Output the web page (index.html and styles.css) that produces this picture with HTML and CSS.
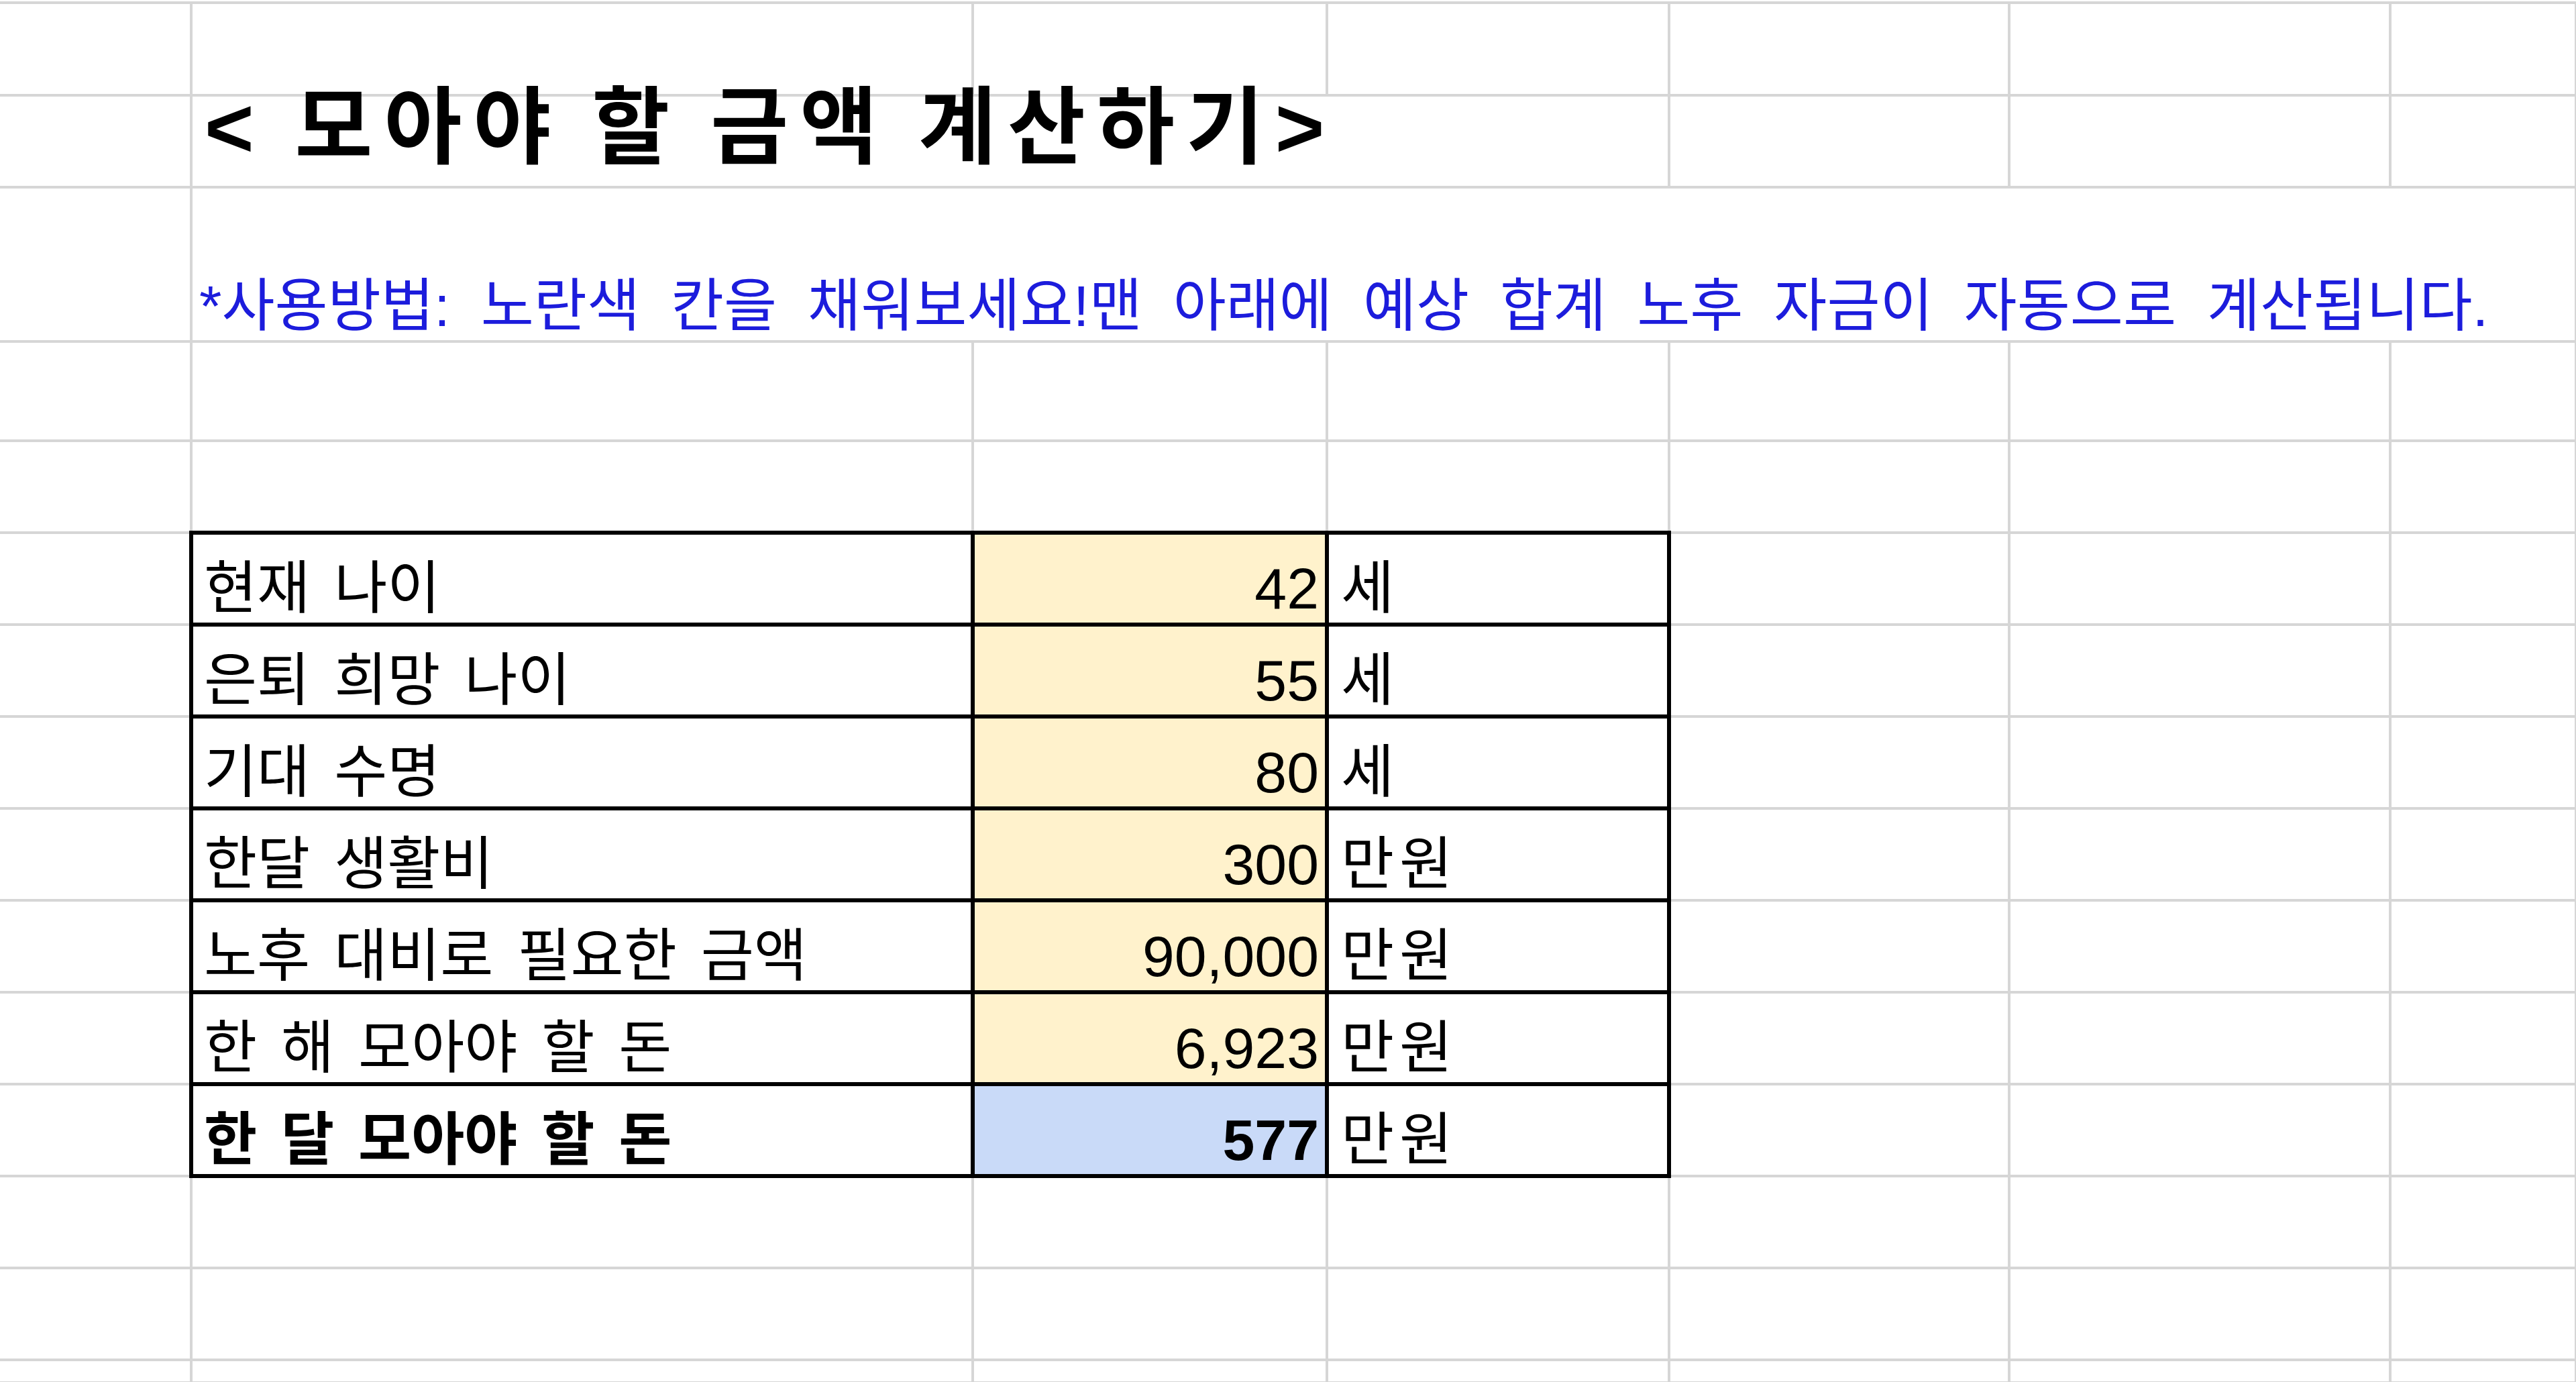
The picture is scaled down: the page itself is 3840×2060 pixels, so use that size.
FILE: index.html
```html
<!DOCTYPE html>
<html lang="ko">
<head>
  <meta charset="UTF-8">
  <title>모아야 할 금액 계산하기</title>
  <link rel="stylesheet" href="styles.css">
</head>
<body>

  <!-- 시트 화면 -->
  <table class="sheet">
    <colgroup>
      <col class="col-a">
      <col class="col-b">
      <col class="col-c">
      <col class="col-d">
      <col class="col-e">
      <col class="col-f">
      <col class="col-g">
    </colgroup>
    <tbody>
      <tr class="row-first">
        <td></td><td></td><td></td><td></td><td></td><td></td><td></td>
      </tr>
      <tr>
        <td></td>
        <td colspan="3" class="title">&lt; 모아야 할 금액 계산하기&gt;</td>
        <td></td><td></td><td></td>
      </tr>
      <tr class="row-note">
        <td></td>
        <td colspan="6" class="note">*사용방법: 노란색 칸을 채워보세요!맨 아래에 예상 합계 노후 자금이 자동으로 계산됩니다.</td>
      </tr>
      <tr class="row-space">
        <td></td><td></td><td></td><td></td><td></td><td></td><td></td>
      </tr>
      <tr>
        <td></td><td></td><td></td><td></td><td></td><td></td><td></td>
      </tr>

      <!-- 입력 칸 (노란색) -->
      <tr>
        <td></td>
        <td class="box label">현재 나이</td>
        <td class="box input num">42</td>
        <td class="box unit">세</td>
        <td></td><td></td><td></td>
      </tr>
      <tr>
        <td></td>
        <td class="box label">은퇴 희망 나이</td>
        <td class="box input num">55</td>
        <td class="box unit">세</td>
        <td></td><td></td><td></td>
      </tr>
      <tr>
        <td></td>
        <td class="box label">기대 수명</td>
        <td class="box input num">80</td>
        <td class="box unit">세</td>
        <td></td><td></td><td></td>
      </tr>
      <tr>
        <td></td>
        <td class="box label">한달 생활비</td>
        <td class="box input num">300</td>
        <td class="box unit">만원</td>
        <td></td><td></td><td></td>
      </tr>
      <tr>
        <td></td>
        <td class="box label">노후 대비로 필요한 금액</td>
        <td class="box input num">90,000</td>
        <td class="box unit">만원</td>
        <td></td><td></td><td></td>
      </tr>
      <tr>
        <td></td>
        <td class="box label">한 해 모아야 할 돈</td>
        <td class="box input num">6,923</td>
        <td class="box unit">만원</td>
        <td></td><td></td><td></td>
      </tr>

      <!-- 결과 칸 (파란색) -->
      <tr>
        <td></td>
        <td class="box label strong">한 달 모아야 할 돈</td>
        <td class="box result num strong">577</td>
        <td class="box unit">만원</td>
        <td></td><td></td><td></td>
      </tr>

      <tr>
        <td></td><td></td><td></td><td></td><td></td><td></td><td></td>
      </tr>
      <tr>
        <td></td><td></td><td></td><td></td><td></td><td></td><td></td>
      </tr>
      <tr class="row-last">
        <td></td><td></td><td></td><td></td><td></td><td></td><td></td>
      </tr>
    </tbody>
  </table>

</body>
</html>
```

FILE: styles.css
```css
html, body {
  margin: 0;
  overflow: hidden;
  background-color: #fff;
}
body {
  font-family: "Liberation Sans", "Noto Sans CJK KR", sans-serif;
  font-size: 86px;
  color: #000;
}
.sheet {
  border-collapse: collapse;
  table-layout: fixed;
  width: 3840px;
  margin-top: 2px;
}
.col-a { width: 285px; }
.col-b { width: 1165px; }
.col-c { width: 528px; }
.col-d { width: 510px; }
.col-e { width: 507px; }
.col-f { width: 568px; }
.col-g { width: 277px; }

tr {
  height: 137px;
}
.row-first {
  height: 138px;
}
.row-note {
  height: 230px;
}
.row-space {
  height: 148px;
}
.row-last {
  height: 34px;
}
td {
  border: 4px solid #d6d6d6;
  padding: 0 14px 8px 16px;
  vertical-align: bottom;
  line-height: 1;
  white-space: nowrap;
  word-spacing: 12px;
}
td:first-child {
  border-left: none;
}
.title {
  font-size: 126px;
  font-weight: bold;
  line-height: 0.6;
  letter-spacing: 17px;
  word-spacing: -8px;
  padding-left: 18px;
  padding-bottom: 48px;
}
.note {
  color: #1c1cdc;
  word-spacing: 22px;
  padding-left: 10px;
}
.box {
  border: 6px solid #000;
}
.num {
  text-align: right;
  padding-right: 9px;
}
.unit {
  padding-left: 18px;
  letter-spacing: 8px;
}
.input {
  background-color: #fff2cc;
}
.result {
  background-color: #c9daf8;
}
.strong {
  font-weight: bold;
}
```
